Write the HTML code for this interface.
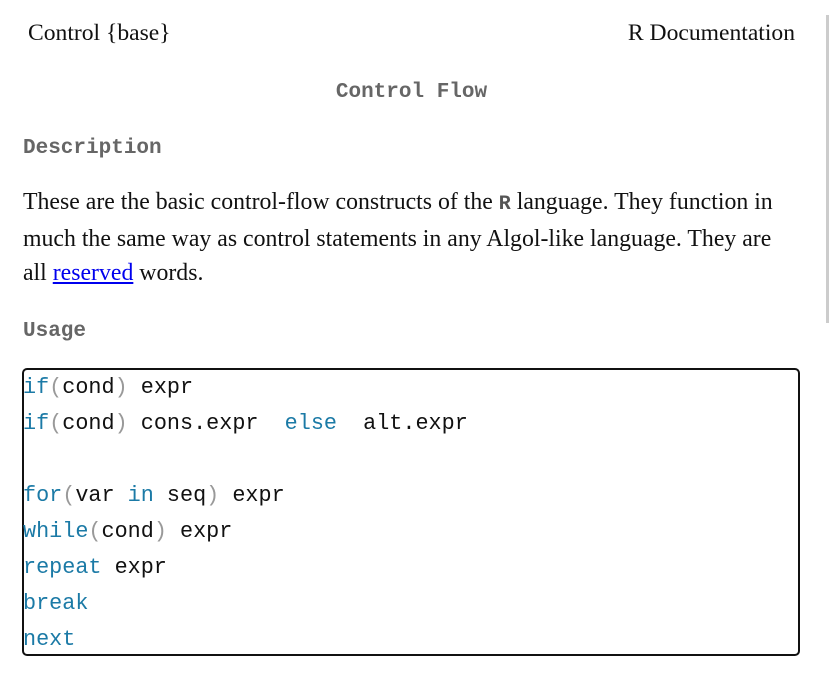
<!DOCTYPE html>
<html><head><meta charset="utf-8"><style>
body{margin:0;width:829px;height:676px;overflow:hidden;background:#fff;font-family:"Liberation Serif",serif;color:#111;position:relative}
.hdr{position:absolute;top:20px;font-size:23.6px}
h2,h3{font-family:"Liberation Mono",monospace;color:#666;font-weight:bold;font-size:21px;margin:0;position:absolute}
p{position:absolute;left:23px;top:185px;width:770px;margin:0;font-size:23.8px;line-height:34px}
p code{font-family:"Liberation Mono",monospace;font-weight:bold;color:#555;font-size:20px}
a{color:#00e}
pre{position:absolute;left:22px;top:368px;width:774px;height:284px;border:2px solid #111;border-radius:5px;margin:0;font-family:"Liberation Mono",monospace;font-size:21.8px;line-height:36px;padding:0;box-sizing:content-box}
pre div{height:36px;margin-left:-1px;position:relative}
.k{color:#1b7aa6}.p{color:#999}
.sb{position:absolute;right:0;top:15px;width:3px;height:308px;background:#ccc}
</style></head><body>
<div class="hdr" style="left:28px">Control {base}</div>
<div class="hdr" style="right:34px">R Documentation</div>
<h2 style="left:0;width:823px;text-align:center;top:81px">Control Flow</h2>
<h3 style="left:23px;top:137px">Description</h3>
<p>These are the basic control-flow constructs of the <code>R</code> language. They function in much the same way as control statements in any Algol-like language. They are all <a href="#">reserved</a> words.</p>
<h3 style="left:23px;top:320px">Usage</h3>
<pre><div><span class="k">if</span><span class="p">(</span>cond<span class="p">)</span> expr</div><div><span class="k">if</span><span class="p">(</span>cond<span class="p">)</span> cons.expr  <span class="k">else</span>  alt.expr</div><div></div><div><span class="k">for</span><span class="p">(</span>var <span class="k">in</span> seq<span class="p">)</span> expr</div><div><span class="k">while</span><span class="p">(</span>cond<span class="p">)</span> expr</div><div><span class="k">repeat</span> expr</div><div><span class="k">break</span></div><div><span class="k">next</span></div></pre>
<div class="sb"></div>
</body></html>
